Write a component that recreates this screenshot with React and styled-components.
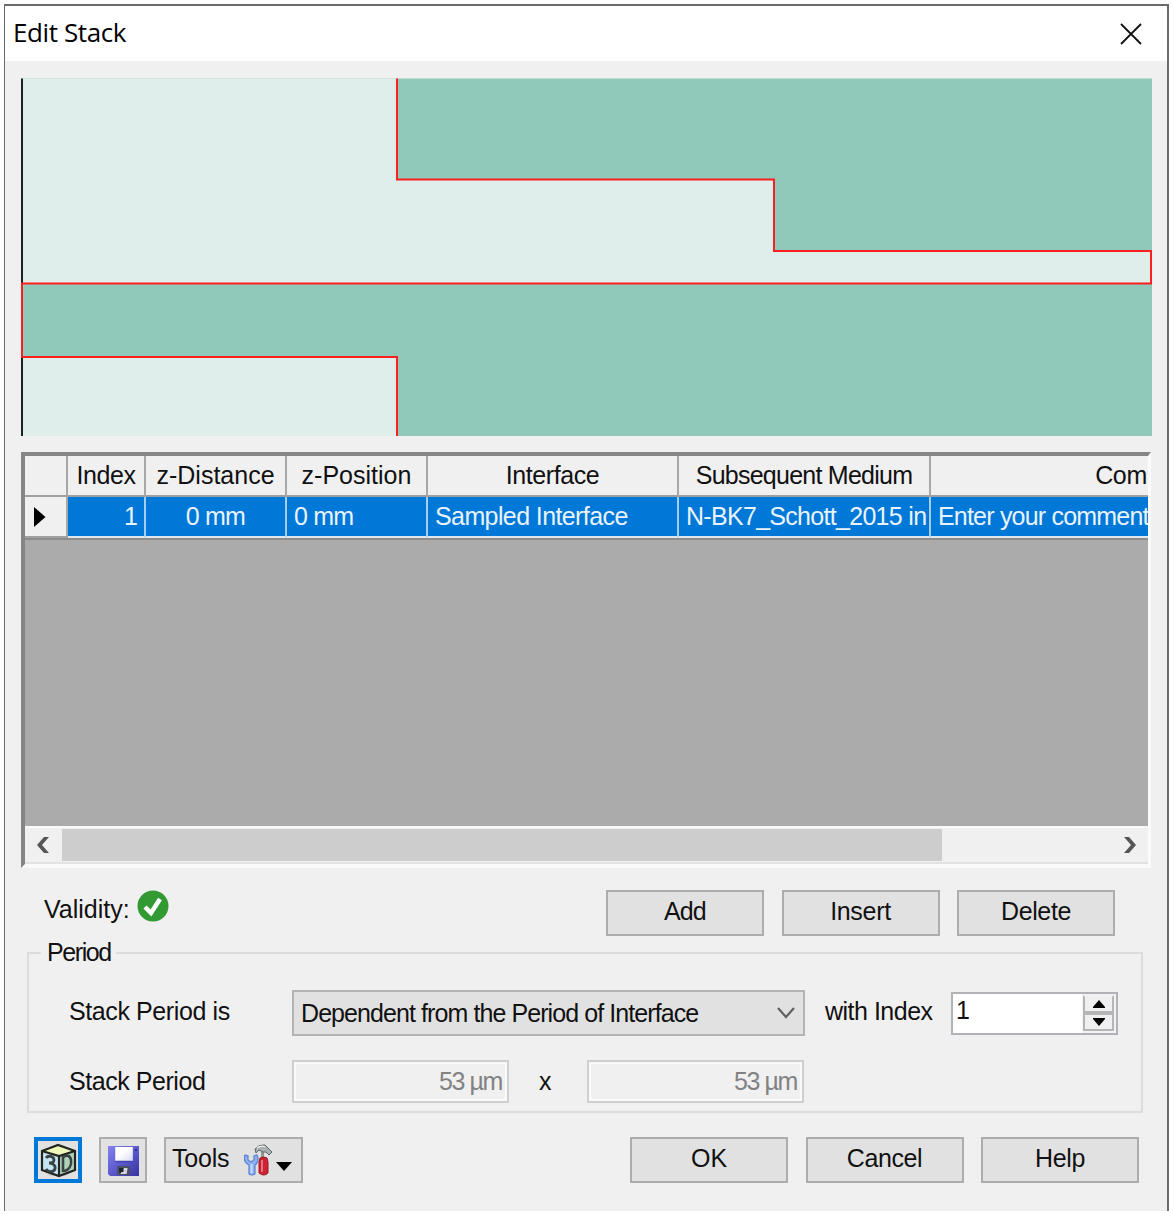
import { useState } from "react";
import styled, { createGlobalStyle } from "styled-components";

const GlobalStyle = createGlobalStyle`
  * {
    box-sizing: border-box;
  }
  body {
    margin: 0;
    background-color: white;
    overflow: hidden;
  }
`;

const Dialog = styled.div`
  margin: 4px 0 0 4px;
  width: 1165px;
  height: 1207px;
  display: flex;
  flex-direction: column;
  border: 2px solid #6b6b6b;
  border-left-width: 1px;
  border-bottom: none;
  background-color: #f0f0f0;
  color: #111;
  font-family: "Liberation Sans", Arial, sans-serif;
  font-size: 25px;
  white-space: pre;
`;

const TitleBar = styled.div`
  height: 55px;
  flex: none;
  display: flex;
  justify-content: space-between;
  align-items: center;
  padding: 0 25px 0 8px;
  background-color: white;
`;

const Title = styled.div`
  padding-bottom: 3px;
  font-family: "Open Sans", sans-serif;
  font-size: 26px;
  letter-spacing: -0.4px;
  color: black;
`;

const Text = styled.span`
  letter-spacing: ${(props) => props.$spacing || 0}px;
`;

const Preview = styled.svg`
  display: block;
  flex: none;
  margin: 17px 0 0 16px;
`;

const Grid = styled.div`
  width: 1130px;
  height: 416px;
  flex: none;
  margin: 16px 0 0 16px;
  display: flex;
  flex-direction: column;
  overflow: hidden;
  border-top: 4px solid #868686;
  border-left: 4px solid #868686;
  border-right: 3px solid #fafafa;
  border-bottom: 4px solid #fafafa;
  background-color: #ababab;
`;

const GridRow = styled.div`
  display: grid;
  flex: none;
  grid-template-columns: 43px 78px 141px 141px 251px 252px 436px;
  height: ${(props) => props.$height}px;
`;

const HeaderCell = styled.div`
  display: flex;
  align-items: center;
  justify-content: center;
  overflow: hidden;
  background-color: #f0f0f0;
  border-right: 2px solid #a8a8a8;
  border-bottom: 2px solid #a0a0a0;
`;

const RowHeader = styled(HeaderCell)`
  justify-content: flex-start;
  padding-left: 9px;
`;

const Cell = styled.div`
  display: flex;
  align-items: center;
  justify-content: ${(props) => props.$align || "flex-start"};
  overflow: hidden;
  padding: 0 ${(props) => (props.$align === "flex-end" ? "6px" : "0")} 0
    ${(props) => (props.$align ? "0" : "7px")};
  color: #e9f3fd;
  background-color: #0078d7;
  border-right: 2px solid #a5cdf0;
  border-bottom: 2px solid #dfe6ec;
`;

const GridShade = styled.div`
  height: 2px;
  flex: none;
  background-color: #8c8c8c;
`;

const ScrollBar = styled.div`
  margin-top: auto;
  height: 38px;
  flex: none;
  display: flex;
  align-items: center;
  background-color: #f0f0f0;
  border-top: 2px solid #fafafa;
  border-bottom: 2px solid #e2e2e2;
`;

const ScrollArrow = styled.div`
  width: 37px;
  flex: none;
  display: flex;
  justify-content: center;
`;

const ScrollThumb = styled.div`
  width: 880px;
  height: 32px;
  margin-right: auto;
  background-color: #cdcdcd;
`;

const ActionRow = styled.div`
  height: 46px;
  flex: none;
  margin-top: 22px;
  display: flex;
  align-items: center;
  padding: 0 52px 0 39px;
`;

const Validity = styled.div`
  display: flex;
  align-items: center;
  gap: 7px;
  margin-right: auto;
  padding-bottom: 8px;

  svg {
    margin-top: -7px;
  }
`;

const ButtonGroup = styled.div`
  display: flex;
  gap: ${(props) => props.$gap || 17.5}px;
`;

const Button = styled.button`
  width: ${(props) => props.$width || 158}px;
  height: 46px;
  flex: none;
  display: flex;
  align-items: center;
  justify-content: center;
  padding: ${(props) => props.$padding || "0 0 3px"};
  border: 2px solid #adadad;
  background-color: #e1e1e1;
  color: #111;
  font: inherit;
`;

const FocusedButton = styled(Button)`
  border: 4px solid #0078d7;
`;

const ToolsButton = styled(Button)`
  justify-content: space-between;
  padding: 0 8px 0 6px;

  span {
    padding-bottom: 3px;
  }
`;

const ToolsIcons = styled.div`
  display: flex;
  align-items: center;
  gap: 3px;
`;

const GroupBox = styled.fieldset`
  width: 1116px;
  height: 174px;
  flex: none;
  margin: 3px 0 0 22px;
  padding: 0;
  border: 2px solid #dcdcdc;
`;

const Legend = styled.legend`
  height: 27px;
  line-height: 27px;
  margin-left: 12px;
  padding: 0 5px 0 6px;
`;

const FormRow = styled.div`
  display: flex;
  align-items: center;
  height: 46px;
  margin-top: ${(props) => props.$top}px;
  padding-left: 39px;
`;

const Label = styled.div`
  width: ${(props) => (props.$width ? props.$width + "px" : "auto")};
  margin: ${(props) => props.$margin || "0"};
  padding-bottom: ${(props) => props.$lift ?? 3}px;
  flex: none;
`;

const Select = styled.div`
  width: 513px;
  height: 46px;
  flex: none;
  display: flex;
  align-items: center;
  justify-content: space-between;
  padding: 0 7px;
  border: 2px solid #b4b4b4;
  background-color: #e1e1e1;
`;

const Spinner = styled.div`
  width: 167px;
  height: 43px;
  flex: none;
  display: flex;
  justify-content: space-between;
  margin-top: 1px;
  border: 2px solid #b0b2b8;
  background-color: white;
`;

const SpinnerValue = styled.div`
  padding: 2px 0 0 3px;
`;

const SpinnerButtons = styled.div`
  display: flex;
  flex-direction: column;
  width: 34px;
  padding: 1px 2px 2px 1px;
  background-color: #f3f3f3;
`;

const SpinnerButton = styled.div`
  flex: 1;
  display: flex;
  align-items: center;
  justify-content: center;
  border: 2px solid #b5b5b5;
  border-top-color: ${(props) => (props.$up ? "#f0f0f0" : "#b5b5b5")};
  background-color: #f0f0f0;
`;

const ReadOnlyInput = styled.div`
  width: 217px;
  height: 43px;
  flex: none;
  display: flex;
  align-items: center;
  justify-content: flex-end;
  padding-right: 5px;
  border: 2px solid #cfcfcf;
  box-shadow: inset 0 0 0 2px #fafafa;
  color: #828282;
`;

const Footer = styled.div`
  height: 46px;
  flex: none;
  display: flex;
  margin-top: 24px;
  padding: 0 28px 0 29px;
  justify-content: space-between;
`;

const columns = [
  { label: "Index", spacing: -0.4 },
  { label: "z-Distance" },
  { label: "z-Position" },
  { label: "Interface", spacing: -0.4 },
  { label: "Subsequent Medium", spacing: -0.75 },
  { label: "Comment", spacing: -0.4 },
];

const cells = [
  { value: "1", align: "flex-end" },
  { value: "0 mm", align: "center", spacing: -0.8 },
  { value: "0 mm", spacing: -0.8 },
  { value: "Sampled Interface", spacing: -0.6 },
  { value: "N-BK7_Schott_2015 in", spacing: -0.7 },
  { value: "Enter your comment here", spacing: -0.8 },
];

const StackPreview = () => (
  <Preview width="1132" height="358" viewBox="0 0 1132 358">
    <path d="M0 0.5H1131V358H0Z" fill="#90c9ba" />
    <path
      d="M0 0.5H376V101.5H753V173H1130V206H0ZM0 279H376V358H0Z"
      fill="#dfeeea"
    />
    <path d="M1 0.5V358" stroke="#1c2422" strokeWidth="2" />
    <path
      d="M376 0.5V101.5H753V173H1130V205.5H1V279H376V358"
      fill="none"
      stroke="#fa2020"
      strokeWidth="2"
    />
  </Preview>
);

const CubeIcon = () => (
  <svg width="37" height="36" viewBox="0 0 37 36">
    <path d="M2 9L18 3L35 9V28L26 34H10L2 28Z" fill="#c9cdca" />
    <path d="M2 10L18 14V34L2 28Z" fill="#c5e5f5" />
    <path d="M19 14L35 10V28L19 34Z" fill="#aed3bd" />
    <path d="M2 9L18 3L35 9L19 14Z" fill="#eef6b8" />
    <path
      d="M2 9L18 3L35 9V28L19 34L2 28ZM2 9L19 14L35 9M19 14V34"
      fill="none"
      stroke="#20251f"
      strokeWidth="2.2"
    />
    <path
      d="M6 16C8 13 14 14 14 18C14 21 10 21 9 21C12 21 16 23 15 27C13 31 8 30 6 27"
      fill="none"
      stroke="#3a4242"
      strokeWidth="2.8"
    />
    <path
      d="M23 15V29C29 29 32 23 31 18C30 13 27 13 23 15Z"
      fill="none"
      stroke="#3a4242"
      strokeWidth="2.6"
    />
  </svg>
);

const SaveIcon = () => (
  <svg width="31" height="32" viewBox="0 0 30 32" preserveAspectRatio="none">
    <defs>
      <linearGradient id="disk" x1="0" y1="0" x2="1" y2="1">
        <stop offset="0" stopColor="#8583e8" />
        <stop offset="0.5" stopColor="#5c5ace" />
        <stop offset="1" stopColor="#35339c" />
      </linearGradient>
      <linearGradient id="label" x1="0" y1="0" x2="1" y2="1">
        <stop offset="0.4" stopColor="white" />
        <stop offset="1" stopColor="#d5dcf2" />
      </linearGradient>
    </defs>
    <path d="M0 1H30V31H2L0 29Z" fill="url(#disk)" />
    <path d="M7 2H24V16H7Z" fill="url(#label)" />
    <path d="M26 4H28V6H26Z" fill="#2c2b85" />
    <path d="M7 16.5H24" stroke="#4442ad" strokeWidth="1.5" />
    <path d="M9 21H21V30H9Z" fill="#4a4e5e" />
    <path d="M11 23H16V28H11Z" fill="#1c2230" />
    <path d="M15 23H19L18 29H12Z" fill="#cfd4de" />
    <path d="M11 23H15V27H11Z" fill="#1c2230" />
  </svg>
);

const ToolsIcon = () => (
  <svg width="28" height="32" viewBox="0 0 28 32">
    <path
      d="M1 11C-1 16 2 20 5 21V30Q8 32 11 30V21C14 19 15 15 13 11L10 12V16L7 18L4 16V12Z"
      fill="#8eb0ee"
      stroke="#5780d0"
      strokeWidth="1.2"
    />
    <path d="M7.5 20V29" stroke="#c9dcfb" strokeWidth="2" />
    <path d="M17 6L20 5V14H17Z" fill="#8d9496" />
    <path
      d="M11 5Q15 0 21 1L24 4L28 8L25 11L22 8L19 8L15 6L12 9Z"
      fill="#a9b0b2"
      stroke="#5f6668"
      strokeWidth="1"
    />
    <path d="M13 4Q17 1 21 3" fill="none" stroke="#eef1f1" strokeWidth="1.3" />
    <path
      d="M16 14Q20 12 23 14L24 18V29Q20 33 15 29V18Z"
      fill="#cb2435"
      stroke="#9d1725"
      strokeWidth="1"
    />
    <path d="M18 16V28" stroke="#ec7a83" strokeWidth="1.8" />
  </svg>
);

const App = () => {
  const [index] = useState(1);
  return (
    <>
      <GlobalStyle />
      <Dialog>
        <TitleBar>
          <Title>Edit Stack</Title>
          <svg width="22" height="22" viewBox="0 0 22 22">
            <path d="M1 1L21 21M21 1L1 21" stroke="#111" strokeWidth="1.8" />
          </svg>
        </TitleBar>

        <StackPreview />

        <Grid>
          <GridRow $height={41}>
            <HeaderCell />
            {columns.map((column) => (
              <HeaderCell key={column.label}>
                <Text $spacing={column.spacing}>{column.label}</Text>
              </HeaderCell>
            ))}
          </GridRow>
          <GridRow $height={41}>
            <RowHeader>
              <svg width="12" height="20" viewBox="0 0 12 20">
                <path d="M0 0L11.5 10L0 20Z" fill="black" />
              </svg>
            </RowHeader>
            {cells.map((cell, i) => (
              <Cell key={i} $align={cell.align}>
                <Text $spacing={cell.spacing}>{cell.value}</Text>
              </Cell>
            ))}
          </GridRow>
          <GridShade />
          <ScrollBar>
            <ScrollArrow>
              <svg width="18" height="16" viewBox="0 0 18 16">
                <path
                  d="M14 0H9L2 8L9 16H14L7 8Z"
                  fill="#555"
                />
              </svg>
            </ScrollArrow>
            <ScrollThumb />
            <ScrollArrow>
              <svg width="14" height="16" viewBox="0 0 14 16">
                <path
                  d="M1 0H6L13 8L6 16H1L8 8Z"
                  fill="#555"
                />
              </svg>
            </ScrollArrow>
          </ScrollBar>
        </Grid>

        <ActionRow>
          <Validity>
            <Text>Validity:</Text>
            <svg width="32" height="32" viewBox="0 0 32 32">
              <circle cx="16" cy="16" r="15.5" fill="#339933" />
              <path
                d="M8 17L14 23L23 9"
                fill="none"
                stroke="white"
                strokeWidth="4.5"
              />
            </svg>
          </Validity>
          <ButtonGroup>
            <Button>
              <Text $spacing={-0.9}>Add</Text>
            </Button>
            <Button>
              <Text $spacing={-0.3}>Insert</Text>
            </Button>
            <Button>
              <Text $spacing={-0.4}>Delete</Text>
            </Button>
          </ButtonGroup>
        </ActionRow>

        <GroupBox>
          <Legend>
            <Text $spacing={-1.4}>Period</Text>
          </Legend>
          <FormRow $top={24}>
            <Label $width={223} $margin="0 0 0 1px">
              <Text $spacing={-0.4}>Stack Period is</Text>
            </Label>
            <Select>
              <Text $spacing={-0.92}>
                Dependent from the Period of Interface
              </Text>
              <svg width="20" height="12" viewBox="0 0 20 12">
                <path
                  d="M2 1L10 10L18 1"
                  fill="none"
                  stroke="#606060"
                  strokeWidth="2.2"
                />
              </svg>
            </Select>
            <Label $width={126} $margin="0 0 0 20px">
              <Text $spacing={-0.5}>with Index</Text>
            </Label>
            <Spinner>
              <SpinnerValue>{index}</SpinnerValue>
              <SpinnerButtons>
                <SpinnerButton $up>
                  <svg width="12" height="8" viewBox="0 0 12 8">
                    <path d="M0 8V7L6 0L12 7V8Z" fill="black" />
                  </svg>
                </SpinnerButton>
                <SpinnerButton>
                  <svg width="12" height="8" viewBox="0 0 12 8">
                    <path d="M0 0V1L6 8L12 1V0Z" fill="black" />
                  </svg>
                </SpinnerButton>
              </SpinnerButtons>
            </Spinner>
          </FormRow>
          <FormRow $top={22}>
            <Label $width={223} $margin="0 0 0 1px" $lift={0}>
              <Text $spacing={-0.45}>Stack Period</Text>
            </Label>
            <ReadOnlyInput>
              <Text $spacing={-1.4}>53 µm</Text>
            </ReadOnlyInput>
            <Label $width={48} $margin="0 0 0 30px" $lift={0}>
              x
            </Label>
            <ReadOnlyInput>
              <Text $spacing={-1.4}>53 µm</Text>
            </ReadOnlyInput>
          </FormRow>
        </GroupBox>

        <Footer>
          <ButtonGroup $gap={17}>
            <FocusedButton $width={48} $padding="0">
              <CubeIcon />
            </FocusedButton>
            <Button $width={48} $padding="2px 0 0">
              <SaveIcon />
            </Button>
            <ToolsButton $width={139}>
              <Text $spacing={-0.2}>Tools</Text>
              <ToolsIcons>
                <ToolsIcon />
                <svg width="18" height="22" viewBox="0 0 18 22">
                  <path d="M1 13H17L9 22Z" fill="black" />
                </svg>
              </ToolsIcons>
            </ToolsButton>
          </ButtonGroup>
          <ButtonGroup>
            <Button>OK</Button>
            <Button>
              <Text $spacing={-0.4}>Cancel</Text>
            </Button>
            <Button>
              <Text $spacing={-0.4}>Help</Text>
            </Button>
          </ButtonGroup>
        </Footer>
      </Dialog>
    </>
  );
};

export default App;
